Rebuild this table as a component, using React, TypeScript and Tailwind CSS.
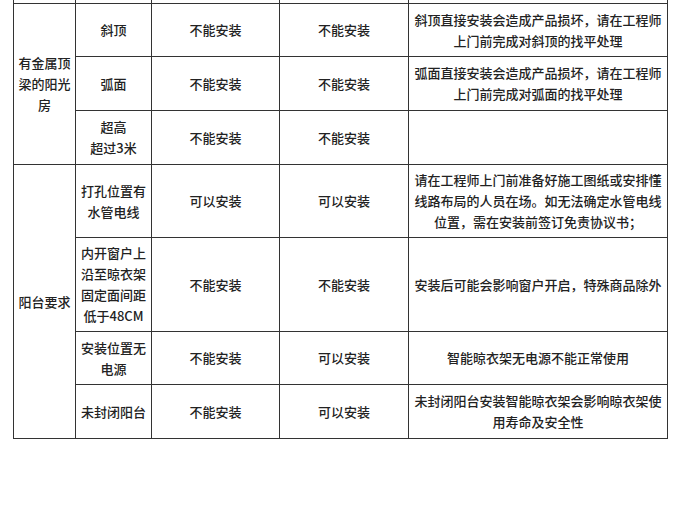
const font = { fontFamily: '"Noto Sans CJK SC", "Noto Sans", sans-serif' };

const td = "border border-[#333] text-center align-middle px-[5px] leading-[21px]";
const tdNarrow = "border border-[#333] text-center align-middle px-[1px] leading-[21px]";

const Lines = ({ lines }: { lines: string[] }) => (
  <>
    {lines.map((l, i) => (
      <span key={i} className="block text-center whitespace-nowrap">
        {l}
      </span>
    ))}
  </>
);

export default function App() {
  return (
    <div className="w-[680px] h-[505px] bg-white text-[13px] font-medium text-[#222]" style={font}>
      <table className="ml-[13px] w-[654px] table-fixed border-collapse">
        <colgroup>
          <col className="w-[62px]" />
          <col className="w-[76px]" />
          <col className="w-[128px]" />
          <col className="w-[129px]" />
          <col className="w-[259px]" />
        </colgroup>
        <tbody>
          <tr className="h-[3px]">
            <td className="border-x border-b border-[#333] p-0" />
            <td className="border-x border-b border-[#333] p-0" />
            <td className="border-x border-b border-[#333] p-0" />
            <td className="border-x border-b border-[#333] p-0" />
            <td className="border-x border-b border-[#333] p-0" />
          </tr>
          <tr className="h-[53px]">
            <td rowSpan={3} className={tdNarrow}>
              <Lines lines={["有金属顶", "梁的阳光", "房"]} />
            </td>
            <td className={td}>斜顶</td>
            <td className={td}>不能安装</td>
            <td className={td}>不能安装</td>
            <td className={td}>斜顶直接安装会造成产品损坏，请在工程师上门前完成对斜顶的找平处理</td>
          </tr>
          <tr className="h-[54px]">
            <td className={td}>弧面</td>
            <td className={td}>不能安装</td>
            <td className={td}>不能安装</td>
            <td className={td}>弧面直接安装会造成产品损坏，请在工程师上门前完成对弧面的找平处理</td>
          </tr>
          <tr className="h-[54px]">
            <td className={td}>
              <Lines lines={["超高", "超过3米"]} />
            </td>
            <td className={td}>不能安装</td>
            <td className={td}>不能安装</td>
            <td className={td}></td>
          </tr>
          <tr className="h-[73px]">
            <td rowSpan={4} className={`${tdNarrow} whitespace-nowrap`}>阳台要求</td>
            <td className={tdNarrow}>
              <Lines lines={["打孔位置有", "水管电线"]} />
            </td>
            <td className={td}>可以安装</td>
            <td className={td}>可以安装</td>
            <td className={td}>请在工程师上门前准备好施工图纸或安排懂线路布局的人员在场。如无法确定水管电线位置，需在安装前签订免责协议书；</td>
          </tr>
          <tr className="h-[94px]">
            <td className={tdNarrow}>
              <Lines lines={["内开窗户上", "沿至晾衣架", "固定面间距", "低于48CM"]} />
            </td>
            <td className={td}>不能安装</td>
            <td className={td}>不能安装</td>
            <td className={td}>安装后可能会影响窗户开启，特殊商品除外</td>
          </tr>
          <tr className="h-[53px]">
            <td className={tdNarrow}>
              <Lines lines={["安装位置无", "电源"]} />
            </td>
            <td className={td}>不能安装</td>
            <td className={td}>可以安装</td>
            <td className={td}>智能晾衣架无电源不能正常使用</td>
          </tr>
          <tr className="h-[54px]">
            <td className={tdNarrow}>未封闭阳台</td>
            <td className={td}>不能安装</td>
            <td className={td}>可以安装</td>
            <td className={td}>未封闭阳台安装智能晾衣架会影响晾衣架使用寿命及安全性</td>
          </tr>
        </tbody>
      </table>
    </div>
  );
}
